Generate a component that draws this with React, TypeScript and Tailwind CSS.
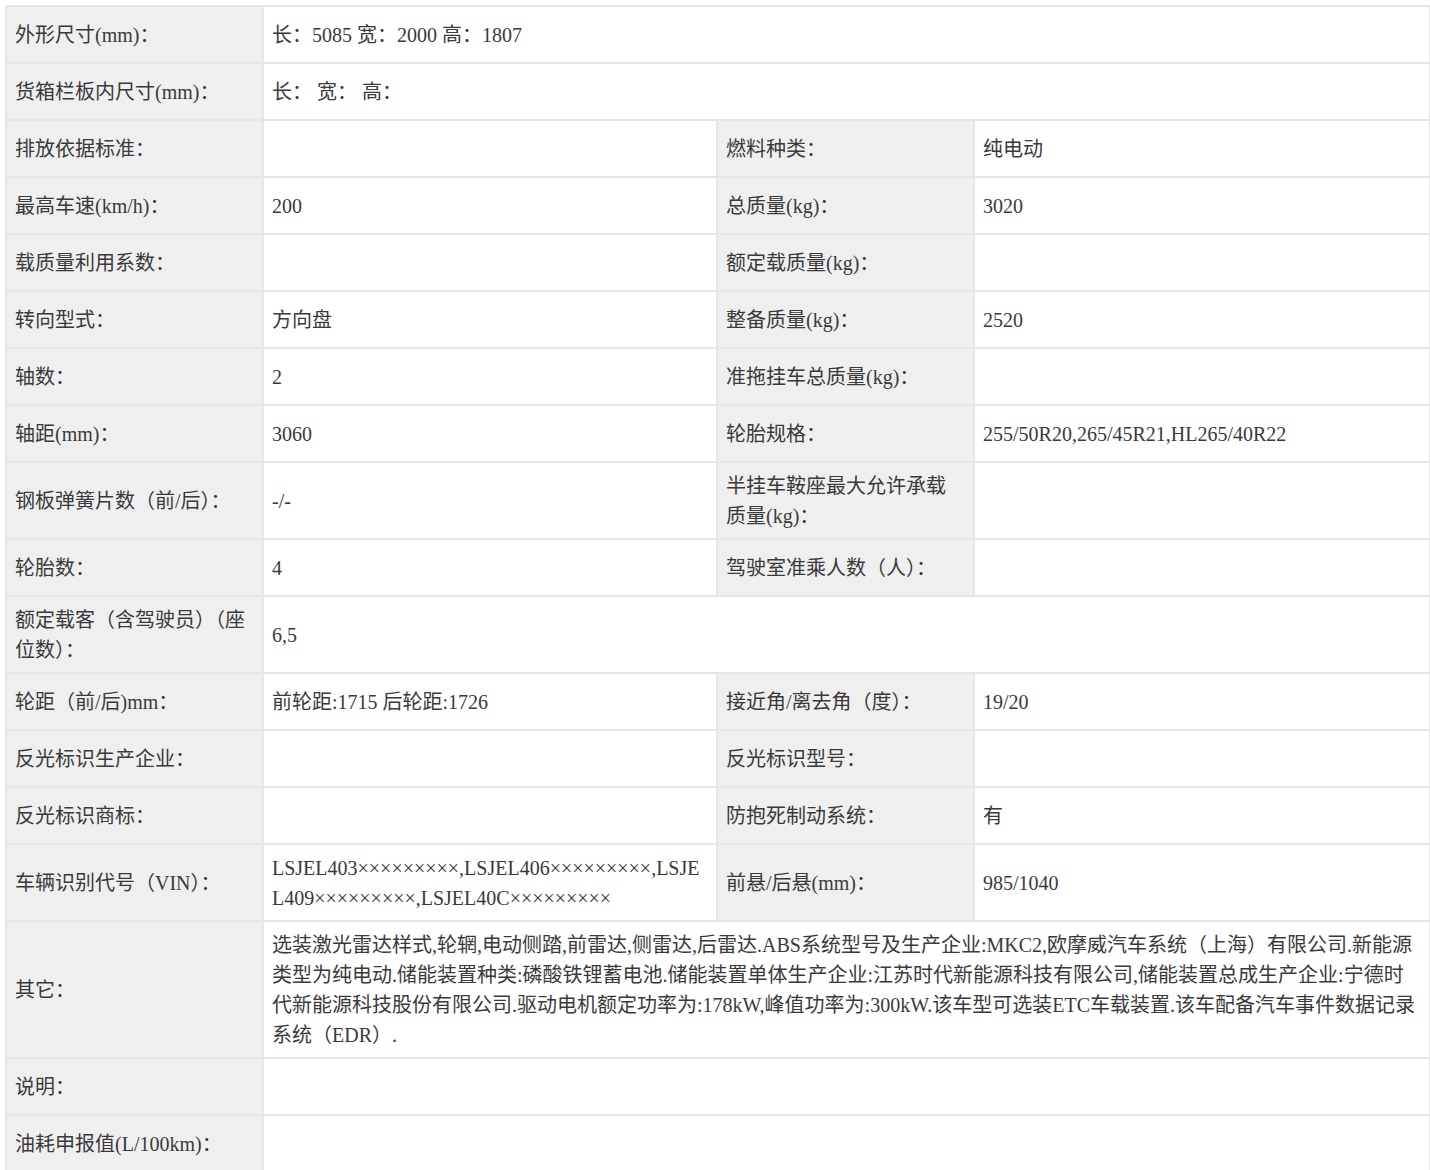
import React from "react";

const rows: { h: string; cells: string[] }[] = [
  { h: "h-[57px]", cells: ["外形尺寸(mm)：", "长：5085 宽：2000 高：1807|3"] },
  { h: "h-[57px]", cells: ["货箱栏板内尺寸(mm)：", "长：  宽：  高：|3"] },
  { h: "h-[57px]", cells: ["排放依据标准：", "", "燃料种类：", "纯电动"] },
  { h: "h-[57px]", cells: ["最高车速(km/h)：", "200", "总质量(kg)：", "3020"] },
  { h: "h-[57px]", cells: ["载质量利用系数：", "", "额定载质量(kg)：", ""] },
  { h: "h-[57px]", cells: ["转向型式：", "方向盘", "整备质量(kg)：", "2520"] },
  { h: "h-[57px]", cells: ["轴数：", "2", "准拖挂车总质量(kg)：", ""] },
  { h: "h-[57px]", cells: ["轴距(mm)：", "3060", "轮胎规格：", "255/50R20,265/45R21,HL265/40R22"] },
  { h: "h-[77px]", cells: ["钢板弹簧片数（前/后）：", "-/-", "半挂车鞍座最大允许承载质量(kg)：", ""] },
  { h: "h-[57px]", cells: ["轮胎数：", "4", "驾驶室准乘人数（人）：", ""] },
  { h: "h-[77px]", cells: ["额定载客（含驾驶员）（座位数）：", "6,5|3"] },
  { h: "h-[57px]", cells: ["轮距（前/后)mm：", "前轮距:1715 后轮距:1726", "接近角/离去角（度）：", "19/20"] },
  { h: "h-[57px]", cells: ["反光标识生产企业：", "", "反光标识型号：", ""] },
  { h: "h-[57px]", cells: ["反光标识商标：", "", "防抱死制动系统：", "有"] },
  { h: "h-[77px]", cells: ["车辆识别代号（VIN）：", "LSJEL403×××××××××,LSJEL406×××××××××,LSJEL409×××××××××,LSJEL40C×××××××××", "前悬/后悬(mm)：", "985/1040"] },
  { h: "h-[137px]", cells: ["其它：", "选装激光雷达样式,轮辋,电动侧踏,前雷达,侧雷达,后雷达.ABS系统型号及生产企业:MKC2,欧摩威汽车系统（上海）有限公司.新能源类型为纯电动.储能装置种类:磷酸铁锂蓄电池.储能装置单体生产企业:江苏时代新能源科技有限公司,储能装置总成生产企业:宁德时代新能源科技股份有限公司.驱动电机额定功率为:178kW,峰值功率为:300kW.该车型可选装ETC车载装置.该车配备汽车事件数据记录系统（EDR）.|3"] },
  { h: "h-[57px]", cells: ["说明：", "|3"] },
  { h: "h-[57px]", cells: ["油耗申报值(L/100km)：", "|3"] },
];

export default function App() {
  return (
    <div className="bg-white w-[1430px] h-[1170px] overflow-hidden pt-[5px] pl-[5px]" style={{ fontFamily: '"Liberation Serif","Noto Sans CJK SC",serif' }}>
      <table className="border-collapse table-fixed w-[1424px] text-[20px] leading-[30px] text-[#3a3a3a]">
        <colgroup>
          <col className="w-[257px]" />
          <col className="w-[454px]" />
          <col className="w-[257px]" />
          <col className="w-[456px]" />
        </colgroup>
        <tbody>
          {rows.map((r, i) => (
            <tr key={i} className={r.h}>
              {r.cells.map((c, j) => {
                const [text, span] = c.split("|");
                const label = j % 2 === 0;
                return (
                  <td
                    key={j}
                    colSpan={span ? Number(span) : 1}
                    className={`border-2 border-[#e6e6e6] px-[8px] py-[1px] align-middle break-all ${label ? "bg-[#efefef]" : "bg-white"}`}
                  >
                    {text}
                  </td>
                );
              })}
            </tr>
          ))}
        </tbody>
      </table>
    </div>
  );
}
